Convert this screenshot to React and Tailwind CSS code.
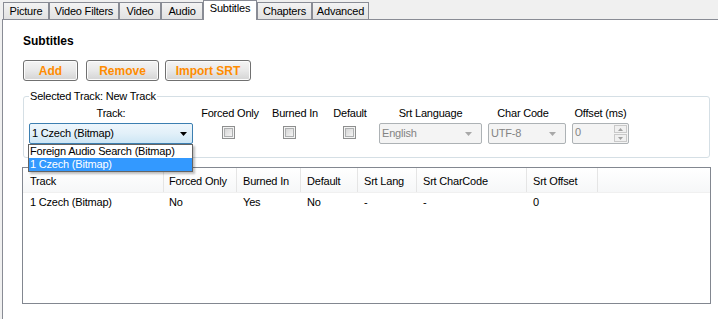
import React from "react";

const tabs = [
  { label: "Picture", w: "w-[46px]" },
  { label: "Video Filters", w: "w-[70px]" },
  { label: "Video", w: "w-[42px]" },
  { label: "Audio", w: "w-[42px]" },
  { label: "Subtitles", w: "w-[54px]", active: true },
  { label: "Chapters", w: "w-[55px]" },
  { label: "Advanced", w: "w-[57px]" },
];

const cols = [
  { label: "Track", w: "w-[141px] pl-[7px]" },
  { label: "Forced Only", w: "w-[73px] pl-[5px]" },
  { label: "Burned In", w: "w-[64px] pl-[6px]" },
  { label: "Default", w: "w-[57px] pl-[6px]" },
  { label: "Srt Lang", w: "w-[59px] pl-[6px]" },
  { label: "Srt CharCode", w: "w-[110px] pl-[6px]" },
  { label: "Srt Offset", w: "w-[71px] pl-[6px]" },
];

const row = ["1 Czech (Bitmap)", "No", "Yes", "No", "-", "-", "0"];

function Tab({ label, w, active }) {
  if (active) {
    return (
      <div
        className={`${w} h-[20px] -mb-px bg-white border border-b-0 border-[#898c95] flex justify-center pt-[1px] leading-[13px] text-black`}
      >
        {label}
      </div>
    );
  }
  return (
    <div
      className={`${w} h-[17px] border border-b-0 border-[#898c95] bg-gradient-to-b from-[#f3f3f3] to-[#e2e2e2] flex items-center justify-center pt-px leading-[13px] text-black`}
    >
      {label}
    </div>
  );
}

function Button({ children, w }) {
  return (
    <div
      className={`${w} h-[21px] rounded-[3px] border border-[#707070] bg-gradient-to-b from-[#f4f4f4] via-[#e8e8e8] to-[#d4d4d4] flex items-center justify-center text-[12px] font-bold text-[#ff8c00] leading-[14px] tracking-normal shadow-[inset_0_0_0_1px_#fcfcfc]`}
    >
      {children}
    </div>
  );
}

function Checkbox() {
  return (
    <div className="mt-[6px] w-[13px] h-[13px] border border-[#8e8f8f] bg-[#f4f4f4] p-px">
      <div className="w-full h-full border border-[#aeb0b1] bg-gradient-to-br from-[#d6d6d6] to-[#f4f4f4]" />
    </div>
  );
}

function Arrow({ color }) {
  return (
    <svg width="7" height="4" viewBox="0 0 7 4" className="block">
      <path d="M0 0 H7 L3.5 4 Z" fill={color} />
    </svg>
  );
}

function DisabledCombo({ w, value }) {
  return (
    <div
      className={`${w} mt-[3px] h-[21px] rounded-[2px] border border-[#adb2b5] bg-[#f4f4f4] flex items-center justify-between pl-[2px] pr-[9px] text-[#838383]`}
    >
      <span className="leading-[13px]">{value}</span>
      <Arrow color="#a8a8a8" />
    </div>
  );
}

export default function App() {
  return (
    <div className="w-[718px] h-[319px] overflow-hidden bg-[#f0f0f0] flex flex-col font-['Liberation_Sans',Arial,sans-serif] text-[11px] tracking-[-0.2px] text-black">
      {/* Tab bar */}
      <div className="h-[19px] flex items-end pl-[3px] relative z-10 shrink-0">
        {tabs.map((t) => (
          <Tab key={t.label} {...t} />
        ))}
      </div>

      {/* Tab page */}
      <div className="flex-1 ml-[2px] border-l border-t border-[#898c95] bg-white pl-[19px] pt-[14px] flex flex-col items-start">
        <div className="text-[12px] font-bold leading-[14px] tracking-normal ml-px">Subtitles</div>

        <div className="mt-[12px] ml-px flex gap-[8px]">
          <Button w="w-[55px]">Add</Button>
          <Button w="w-[73px]">Remove</Button>
          <div className="-ml-[2px]">
            <Button w="w-[86px]">Import SRT</Button>
          </div>
        </div>

        <fieldset className="mt-[9px] ml-px w-[687px] border border-[#d5dfe5] rounded-[3px] pl-[5px] pt-[4px] pb-[13px] relative z-20">
          <legend className="px-px leading-[13px]">Selected Track: New Track</legend>
          <div className="flex items-start">
            {/* Track */}
            <div className="w-[164px] flex flex-col items-center relative">
              <div className="leading-[13px]">Track:</div>
              <div className="mt-[3px] w-[164px] h-[21px] rounded-[2px] border border-[#3c7fb1] bg-gradient-to-b from-[#eef6fc] via-[#e2f0f9] to-[#cde6f5] flex items-center justify-between pl-[2px] pr-[5px]">
                <span className="leading-[13px]">1 Czech (Bitmap)</span>
                <Arrow color="#000" />
              </div>
              <div className="absolute top-[37px] -left-px w-[165px] border border-[#646464] bg-white shadow-[2px_2px_2px_rgba(0,0,0,0.25)] flex flex-col">
                <div className="h-[13px] leading-[13px] pl-px">Foreign Audio Search (Bitmap)</div>
                <div className="h-[13px] leading-[13px] pl-px bg-[#3399ff] text-white">1 Czech (Bitmap)</div>
              </div>
            </div>

            {/* Forced Only */}
            <div className="ml-[6px] w-[62px] flex flex-col items-center">
              <div className="leading-[13px]">Forced Only</div>
              <div className="-ml-[3px]">
                <Checkbox />
              </div>
            </div>

            {/* Burned In */}
            <div className="ml-[4px] w-[60px] flex flex-col items-center">
              <div className="leading-[13px]">Burned In</div>
              <div className="-ml-[12px]">
                <Checkbox />
              </div>
            </div>

            {/* Default */}
            <div className="ml-[1px] w-[48px] flex flex-col items-center">
              <div className="leading-[13px]">Default</div>
              <div className="-ml-[2px]">
                <Checkbox />
              </div>
            </div>

            {/* Srt Language */}
            <div className="ml-[5px] w-[103px] flex flex-col items-center">
              <div className="leading-[13px]">Srt Language</div>
              <DisabledCombo w="w-[103px]" value="English" />
            </div>

            {/* Char Code */}
            <div className="ml-[6px] w-[78px] flex flex-col items-center">
              <div className="leading-[13px] -ml-[8px]">Char Code</div>
              <DisabledCombo w="w-[78px]" value="UTF-8" />
            </div>

            {/* Offset */}
            <div className="ml-[6px] w-[57px] flex flex-col items-center">
              <div className="leading-[13px]">Offset (ms)</div>
              <div className="mt-[3px] w-[57px] h-[21px] rounded-[2px] border border-[#adb2b5] bg-[#f4f4f4] flex items-stretch justify-between pl-[2px] text-[#838383]">
                <span className="leading-[13px] pt-[2px]">0</span>
                <div className="w-[13px] my-px mr-px flex flex-col gap-px">
                  <div className="flex-1 border border-[#c9c9c9] bg-[#f0f0f0] flex items-center justify-center">
                    <svg width="5" height="3" viewBox="0 0 5 3"><path d="M0 3 H5 L2.5 0 Z" fill="#a0a0a0" /></svg>
                  </div>
                  <div className="flex-1 border border-[#c9c9c9] bg-[#f0f0f0] flex items-center justify-center">
                    <svg width="5" height="3" viewBox="0 0 5 3"><path d="M0 0 H5 L2.5 3 Z" fill="#a0a0a0" /></svg>
                  </div>
                </div>
              </div>
            </div>
          </div>
        </fieldset>

        {/* List view */}
        <div className="mt-[9px] w-[689px] h-[137px] border border-[#828790] bg-white flex flex-col">
          <div className="h-[25px] flex bg-gradient-to-b from-[#ffffff] to-[#f6f7f8] border-b border-[#f0f0f0]">
            {cols.map((c) => (
              <div key={c.label} className={`${c.w} border-r border-[#e5e5e5] flex items-center pt-[2px] leading-[13px]`}>
                {c.label}
              </div>
            ))}
          </div>
          <div className="h-[19px] flex">
            {cols.map((c, i) => (
              <div key={c.label} className={`${c.w} flex items-center leading-[13px]`}>
                {row[i]}
              </div>
            ))}
          </div>
        </div>
      </div>
    </div>
  );
}
